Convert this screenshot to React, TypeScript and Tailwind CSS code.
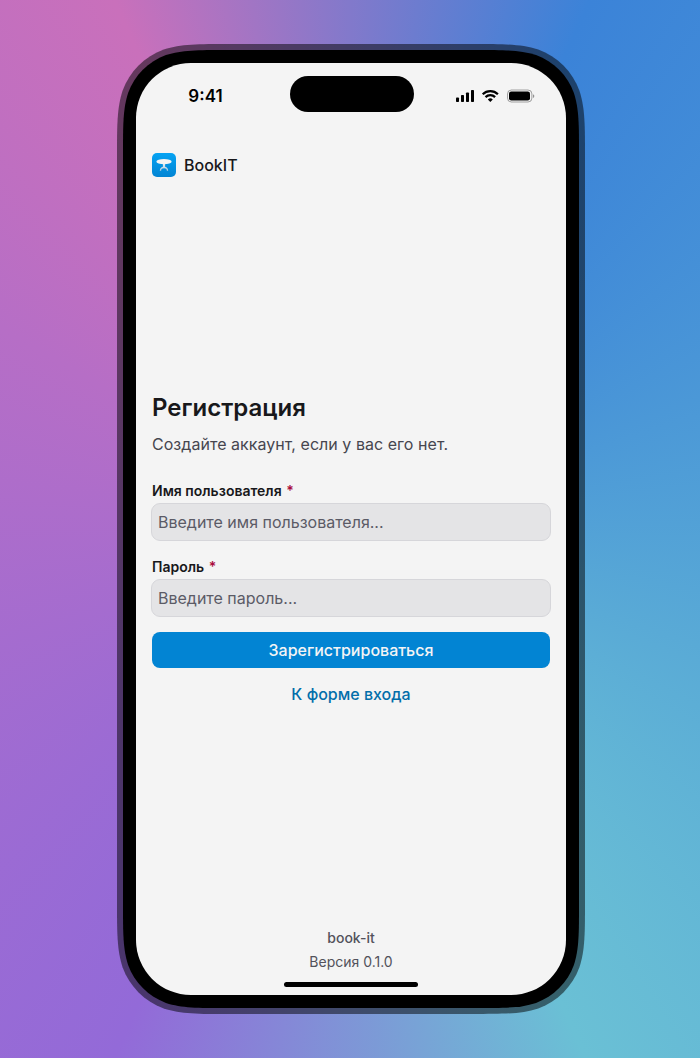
import React from "react";

// Outline of a rectangle with continuous-curvature corners.
function squircle(w: number, h: number, r: number): string {
  const a = 1.52866 * r, b = 1.08849 * r, c = 0.86841 * r;
  const d = 0.63149 * r, e = 0.07491 * r, f = 0.37282 * r, g = 0.16906 * r;
  return `path("M${a} 0 L${w - a} 0 C${w - b} 0 ${w - c} 0 ${w - d} ${e} C${w - f} ${g} ${w - g} ${f} ${w - e} ${d} C${w} ${c} ${w} ${b} ${w} ${a} L${w} ${h - a} C${w} ${h - b} ${w} ${h - c} ${w - e} ${h - d} C${w - g} ${h - f} ${w - f} ${h - g} ${w - d} ${h - e} C${w - c} ${h} ${w - b} ${h} ${w - a} ${h} L${a} ${h} C${b} ${h} ${c} ${h} ${d} ${h - e} C${f} ${h - g} ${g} ${h - f} ${e} ${h - d} C0 ${h - c} 0 ${h - b} 0 ${h - a} L0 ${a} C0 ${b} 0 ${c} ${e} ${d} C${g} ${f} ${f} ${g} ${d} ${e} C${c} 0 ${b} 0 ${a} 0 Z")`;
}

function StatusBar() {
  return (
    <div className="flex h-[66px]">
      <div className="w-[154px] pt-[21px] pr-[15px] text-center text-[17px] leading-6 font-semibold text-black">
        9:41
      </div>
      <div className="mt-[13px] h-9 w-[124px] rounded-full bg-black" />
      <div className="flex w-[152px] gap-[7px] pt-[26px] pl-[42px]">
        <svg width="18" height="14" viewBox="0 0 18 14" fill="black">
          <rect x="0" y="8.5" width="3" height="4.5" rx="0.8" />
          <rect x="5" y="6" width="3" height="7" rx="0.8" />
          <rect x="10" y="3.5" width="3" height="9.5" rx="0.8" />
          <rect x="15" y="1" width="3" height="12" rx="0.8" />
        </svg>
        <svg width="19" height="14" viewBox="-0.6 0 19 14" fill="none" stroke="black" strokeWidth="2.2">
          <path d="M1.1 5.2 A10.8 10.8 0 0 1 16.3 5.2" />
          <path d="M3.9 8.1 A6.8 6.8 0 0 1 13.5 8.1" />
          <path d="M8.7 13.1 L6.2 10.6 A3.5 3.5 0 0 1 11.2 10.6 Z" fill="black" stroke="none" />
        </svg>
        <svg width="28" height="14" viewBox="0 0 28 14">
          <rect x="0.5" y="1" width="24.4" height="12" rx="3.9" fill="none" stroke="#000" strokeOpacity="0.35" />
          <rect x="2" y="2.5" width="21" height="9" rx="2.3" fill="black" />
          <path d="M26 5.2 Q27.3 5.8 27.3 7.1 T26 9 Z" fill="black" opacity="0.4" />
        </svg>
      </div>
    </div>
  );
}

function Logo() {
  return (
    <svg width="24" height="24" viewBox="0 0 24 24">
      <defs>
        <linearGradient id="tile" x1="0" y1="0" x2="0" y2="1">
          <stop offset="0" stopColor="#05a3f3" />
          <stop offset="1" stopColor="#0284d3" />
        </linearGradient>
        <linearGradient id="leg" x1="0" y1="0" x2="0" y2="1">
          <stop offset="0" stopColor="#e4edf3" />
          <stop offset="1" stopColor="#b8ccdb" />
        </linearGradient>
      </defs>
      <rect width="24" height="24" rx="5" fill="url(#tile)" />
      <path d="M10.9 10 H13.1 V13.8 C15 14 16 15.5 16.2 17.8 H14.9 C14.7 16 14 15.3 12 15.3 S9.3 16 9.1 17.8 H7.8 C8 15.5 9 14 10.9 13.8 Z" fill="url(#leg)" />
      <ellipse cx="12" cy="8.7" rx="7.6" ry="2.6" fill="#f4f4f4" />
    </svg>
  );
}

function Field({ label, placeholder, type }: { label: string; placeholder: string; type: string }) {
  return (
    <label className="block h-19">
      <span className="block h-6 text-sm leading-[23px] font-semibold text-[#18181b]">
        {label} <span className="ml-px text-[#a90a3c]">*</span>
      </span>
      <input
        type={type}
        placeholder={placeholder}
        className="-mx-px block h-[38px] w-[400px] rounded-[9px] border border-[#d6d6da] bg-[#e4e4e6] px-1.5 pb-px text-base text-[#18181b] outline-none placeholder:text-[#5b5b66]"
      />
    </label>
  );
}

export default function App() {
  return (
    <div className="flex h-[1058px] w-[700px] items-start overflow-hidden bg-[conic-gradient(#8279cb_0deg,#3b83d8_24.4deg,#6ac0d5_156deg,#936ad8_204deg,#b66ec6_300deg,#c970bb_336deg,#8279cb_360deg)] pt-[44px] pl-[117px] font-['Inter',sans-serif]">
      <div className="h-[970px] w-[468px] bg-black/50 p-1.5" style={{ clipPath: squircle(468, 970, 74) }}>
        <div className="h-[958px] w-[456px] bg-black p-[13px]" style={{ clipPath: squircle(456, 958, 68) }}>
          <div className="flex h-[932px] w-[430px] flex-col overflow-hidden rounded-[55px] bg-[#f4f4f4]">
            <StatusBar />
            <header className="mt-6 flex h-6 items-center gap-2 px-4">
              <Logo />
              <span className="text-base font-medium text-[#18181b]">BookIT</span>
            </header>
            <main className="mt-[215px] px-4">
              <h1 className="h-8 text-2xl leading-8 font-semibold text-[#18181b]">Регистрация</h1>
              <p className="mt-1.5 h-7 text-base leading-7 tracking-[0.04px] text-[#46464f]">Создайте аккаунт, если у вас его нет.</p>
              <form className="mt-[21px]">
                <Field label="Имя пользователя" placeholder="Введите имя пользователя..." type="text" />
                <Field label="Пароль" placeholder="Введите пароль..." type="password" />
                <button type="button" className="mt-px block h-9 w-full rounded-lg bg-[#0284d3] text-base font-medium text-[#f4f4f5]">
                  Зарегистрироваться
                </button>
              </form>
              <div className="mt-2 text-center text-base leading-9 font-medium text-[#026eaa]">К форме входа</div>
            </main>
            <footer className="mt-auto flex flex-col items-center pb-2 text-sm leading-6 text-[#52525b]">
              <span className="font-medium">book-it</span>
              <span>Версия 0.1.0</span>
              <div className="mt-2 h-[5px] w-[134px] rounded-full bg-black" />
            </footer>
          </div>
        </div>
      </div>
    </div>
  );
}
